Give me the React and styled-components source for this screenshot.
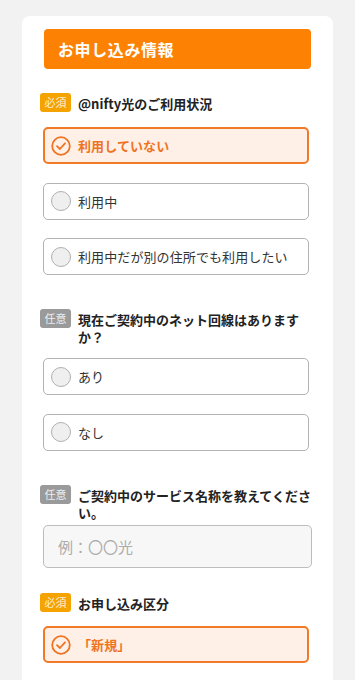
import React from 'react';
import styled, { createGlobalStyle, css } from 'styled-components';

const GlobalStyle = createGlobalStyle`
  html, body {
    margin: 0;
    padding: 0;
    background: #f2f2f2;
    font-family: "Noto Sans CJK JP", "Noto Sans", sans-serif;
    color: #222;
  }
  * { box-sizing: border-box; }
`

const Card = styled.div`
  margin: 16px 22px 0;
  background: #ffffff;
  border-radius: 8px 8px 0 0;
  padding: 13px 24px 40px 21px;
  min-height: 700px;
`

const Header = styled.h2`
  margin: 0 -2px 0 1px;
  height: 40px;
  background: #fd8204;
  border-radius: 4px;
  color: #ffffff;
  font-size: 16px;
  font-weight: 700;
  letter-spacing: 0.6px;
  line-height: 40px;
  padding-left: 14px;
`

const Section = styled.section`
  margin-top: ${p => p.$top}px;
  display: flex;
  flex-direction: column;
`

const QuestionRow = styled.div`
  display: flex;
  align-items: flex-start;
  gap: 7px;
  margin-left: -3px;
  margin-right: -3px;
`

const Badge = styled.span`
  flex: none;
  width: 31px;
  height: 19px;
  border-radius: 3px;
  background: ${p => (p.$required ? '#f5a300' : '#9a9a9a')};
  color: rgba(255, 255, 255, 0.85);
  font-size: 11px;
  line-height: 19px;
  text-align: center;
`

const Label = styled.span`
  padding-top: 2px;
  font-size: 13px;
  font-weight: 700;
  line-height: 17px;
  color: #222;
`

const Options = styled.div`
  margin-top: ${p => p.$top}px;
  display: flex;
  flex-direction: column;
  gap: 18.5px;
`

const Option = styled.label`
  display: flex;
  align-items: center;
  gap: 7px;
  height: 37px;
  padding-left: 7px;
  border-radius: 5px;
  border: 1px solid #b3b3b3;
  background: #ffffff;
  font-size: 13px;
  color: #333;
  letter-spacing: 0.1px;
  ${p => p.$checked && css`
    border: 2px solid #f07a28;
    padding-left: 6px;
    background: #fff0e7;
    color: #ee7423;
    font-weight: 700;
  `}
`

const Dot = styled.span`
  flex: none;
  width: 20px;
  height: 20px;
  border-radius: 50%;
  border: 1px solid #b0b0b0;
  background: #efefef;
`

const TextInput = styled.input`
  margin-top: 4.5px;
  margin-right: -3px;
  height: 43px;
  border: 1px solid #bcbcbc;
  border-radius: 5px;
  background: #f7f7f7;
  padding: 0 14px;
  font-family: inherit;
  font-size: 15px;
  color: #333;
  outline: none;
  &::placeholder { color: #ababab; }
`

const CheckIcon = () => (
  <svg width="20" height="20" viewBox="0 0 20 20" style={{ flex: 'none' }}>
    <circle cx="10" cy="10" r="8.8" fill="none" stroke="#ee7423" strokeWidth="1.8" />
    <path d="M6 10.2 L8.9 13 L14 7.3" fill="none" stroke="#ee7423" strokeWidth="1.8" strokeLinecap="round" strokeLinejoin="round" />
  </svg>
)

const Radio = ({ checked, children }) => (
  <Option $checked={checked}>
    {checked ? <CheckIcon /> : <Dot />}
    {children}
  </Option>
)

const Question = ({ required, children }) => (
  <QuestionRow>
    <Badge $required={required}>{required ? '必須' : '任意'}</Badge>
    <Label>{children}</Label>
  </QuestionRow>
)

export default function App() {
  return (
    <>
      <GlobalStyle />
      <Card>
        <Header>お申し込み情報</Header>

        <Section $top={24}>
          <Question required>@nifty光のご利用状況</Question>
          <Options $top={15}>
            <Radio checked>利用していない</Radio>
            <Radio>利用中</Radio>
            <Radio>利用中だが別の住所でも利用したい</Radio>
          </Options>
        </Section>

        <Section $top={34}>
          <Question>現在ご契約中のネット回線はありますか？</Question>
          <Options $top={13}>
            <Radio>あり</Radio>
            <Radio>なし</Radio>
          </Options>
        </Section>

        <Section $top={34}>
          <Question>ご契約中のサービス名称を教えてください。</Question>
          <TextInput placeholder="例：〇〇光" />
        </Section>

        <Section $top={25}>
          <Question required>お申し込み区分</Question>
          <Options $top={14}>
            <Radio checked>「新規」</Radio>
          </Options>
        </Section>
      </Card>
    </>
  );
}
